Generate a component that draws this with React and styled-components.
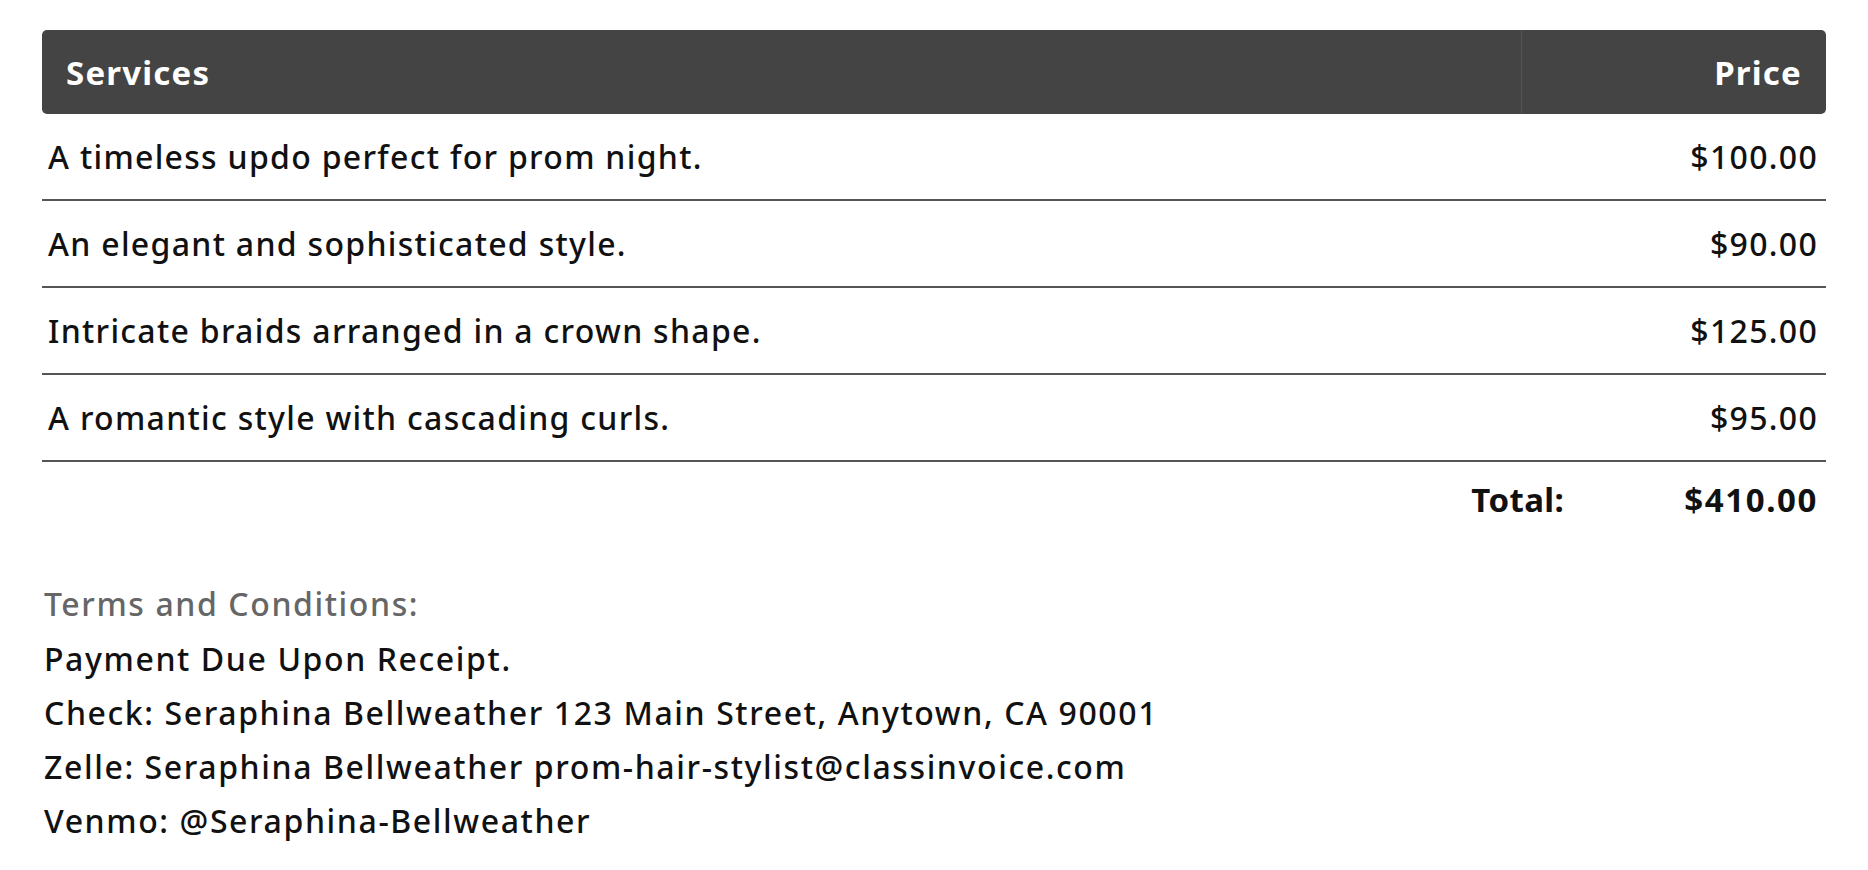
import React from 'react'
import styled, { createGlobalStyle } from 'styled-components'

const GlobalStyle = createGlobalStyle`
  body {
    margin: 0;
    background: #fff;
    font-family: "Noto Sans", Lato, sans-serif;
    color: #111;
  }
`

const Page = styled.div`
  padding: 30px 42px 0 42px;
`

const Table = styled.div`
  width: 1784px;
  display: flex;
  flex-direction: column;
`

const HeaderRow = styled.div`
  display: grid;
  grid-template-columns: 1fr 305px;
  height: 84px;
  background: #444444;
  border-radius: 5px;
  color: #fff;
  font-weight: 700;
  font-size: 33px;
  letter-spacing: 1.2px;
`

const HeadCell = styled.div`
  display: flex;
  align-items: center;
  justify-content: ${({ right }) => (right ? 'flex-end' : 'flex-start')};
  padding: ${({ right }) => (right ? '0 24px 0 0' : '0 0 0 24px')};
  border-left: ${({ right }) => (right ? '1px solid #555' : 'none')};
`

const Row = styled.div`
  display: flex;
  justify-content: space-between;
  align-items: center;
  height: 85px;
  padding: 0 8px 0 6px;
  border-bottom: 2px solid #555;
  font-size: 32px;
  font-weight: 500;
  letter-spacing: 1.3px;
`

const TotalRow = styled.div`
  display: flex;
  justify-content: flex-end;
  align-items: center;
  gap: 120px;
  height: 74px;
  padding-right: 8px;
  font-size: 33px;
  font-weight: 700;
`

const TotalLabel = styled.span`
  letter-spacing: 0.4px;
`

const TotalValue = styled.span`
  letter-spacing: 1.6px;
`

const Terms = styled.div`
  margin-top: 40px;
  padding-left: 2px;
  display: flex;
  flex-direction: column;
  font-size: 32px;
  font-weight: 500;
  letter-spacing: 1.6px;
`

const TermsTitle = styled.div`
  color: #666;
  line-height: 56px;
`

const TermsLine = styled.div`
  line-height: 54px;
`

const services = [
  ['A timeless updo perfect for prom night.', '$100.00'],
  ['An elegant and sophisticated style.', '$90.00'],
  ['Intricate braids arranged in a crown shape.', '$125.00'],
  ['A romantic style with cascading curls.', '$95.00'],
]

export default function App() {
  return (
    <Page>
      <GlobalStyle />
      <Table>
        <HeaderRow>
          <HeadCell>Services</HeadCell>
          <HeadCell right>Price</HeadCell>
        </HeaderRow>
        {services.map(([desc, price], i) => (
          <Row key={i}>
            <span>{desc}</span>
            <span>{price}</span>
          </Row>
        ))}
        <TotalRow>
          <TotalLabel>Total:</TotalLabel>
          <TotalValue>$410.00</TotalValue>
        </TotalRow>
      </Table>
      <Terms>
        <TermsTitle>Terms and Conditions:</TermsTitle>
        <TermsLine>Payment Due Upon Receipt.</TermsLine>
        <TermsLine>Check: Seraphina Bellweather 123 Main Street, Anytown, CA 90001</TermsLine>
        <TermsLine>Zelle: Seraphina Bellweather prom-hair-stylist@classinvoice.com</TermsLine>
        <TermsLine>Venmo: @Seraphina-Bellweather</TermsLine>
      </Terms>
    </Page>
  )
}
